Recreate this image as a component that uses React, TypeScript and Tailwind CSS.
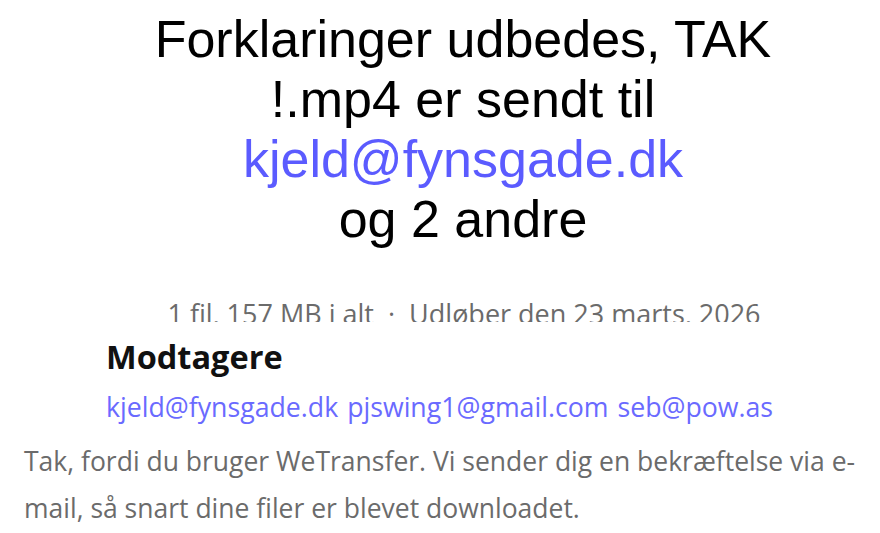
export default function App() {
  const recipients = ["kjeld@fynsgade.dk", "pjswing1@gmail.com", "seb@pow.as"];

  return (
    <div className="w-[880px] h-[533px] overflow-hidden bg-white">
      {/* Headline */}
      <div className="pt-[9px] pl-[46px] text-center font-['Liberation_Sans',Arial,sans-serif] text-[52px] leading-[60px] text-black">
        <h1>Forklaringer udbedes, TAK</h1>
        <p>!.mp4 er sendt til</p>
        <p className="text-[#5b5bff]">kjeld@fynsgade.dk</p>
        <p>og 2 andre</p>
      </div>

      <div className="font-['Open_Sans','Noto_Sans',sans-serif]">
        {/* Meta line, cut off at the bottom */}
        <div className="mt-[47px] h-[26px] overflow-hidden pl-[48px] text-center text-[27px] leading-[36px] text-[#6b6b6b]">
          1 fil, 157 MB i alt &nbsp;·&nbsp; Udløber den 23 marts, 2026
        </div>

        {/* Recipients */}
        <div className="mt-[15px] pl-[106px]">
          <h2 className="text-[32.5px] leading-[40px] font-bold text-[#111]">Modtagere</h2>
          <div className="mt-[13px] flex gap-[9px] text-[26.7px] leading-[34px] text-[#6a6aff]">
            {recipients.map((r) => (
              <span key={r}>{r}</span>
            ))}
          </div>
        </div>

        {/* Thank-you note */}
        <p className="mt-[14px] pl-[24px] w-[860px] text-[26.5px] leading-[47px] text-[#6b6b6b]">
          Tak, fordi du bruger WeTransfer. Vi sender dig en bekræftelse via e-mail, så snart dine filer er blevet downloadet.
        </p>
      </div>
    </div>
  );
}
